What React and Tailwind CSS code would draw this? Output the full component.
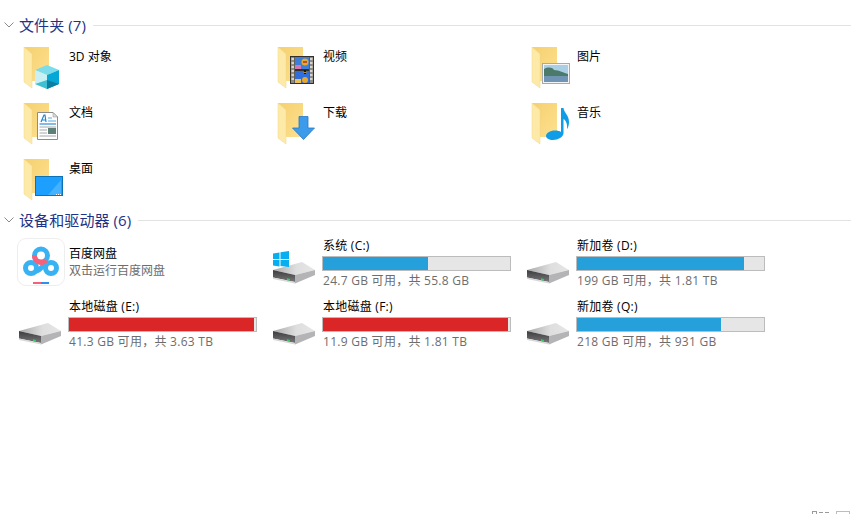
import React from "react";

const font = "font-['Open_Sans','Noto_Sans_CJK_SC',sans-serif]";

const FolderBase = ({ children }) => (
    <svg width="48" height="48" viewBox="0 0 48 48" className="block shrink-0">
        <defs>
            <linearGradient id="folderBack" x1="0" y1="0" x2="1" y2="1">
                <stop offset="0" stopColor="#f5d06f" />
                <stop offset="1" stopColor="#fde08f" />
            </linearGradient>
        </defs>
        <path d="M8 3H33V37H8Z" fill="url(#folderBack)" />
        <path d="M8 3L16 10V44L8 38Z" fill="#fdeaa9" stroke="#f1d488" strokeWidth="0.5" />
        {children}
    </svg>
);

const CubeIcon = () => (
    <FolderBase>
        <path d="M19 26L31 21L43 26L31 31Z" fill="#7bdcec" />
        <path d="M19 26L31 31V45L19 40Z" fill="#c9f0f4" />
        <path d="M19 40L31 36V45Z" fill="#3fbfd2" />
        <path d="M43 26V40L31 45V31Z" fill="#05a7d6" />
        <path d="M43 40L31 36V45Z" fill="#0b7f9f" />
    </FolderBase>
);

const VideoIcon = () => (
    <FolderBase>
        <rect x="20" y="12" width="24" height="28" fill="#33302c" />
        <rect x="21" y="13" width="3.5" height="26" fill="#8f8c86" />
        <rect x="39.5" y="13" width="3.5" height="26" fill="#8f8c86" />
        <path d="M21.5 15h2.5M21.5 19h2.5M21.5 23h2.5M21.5 27h2.5M21.5 31h2.5M21.5 35h2.5M40 15h2.5M40 19h2.5M40 23h2.5M40 27h2.5M40 31h2.5M40 35h2.5" stroke="#efece5" strokeWidth="1.5" />
        <rect x="25" y="13" width="14" height="12" fill="#3f7ed8" />
        <rect x="25" y="27" width="14" height="12" fill="#2f6ddb" />
        <rect x="25" y="21" width="6" height="4" fill="#d678b0" />
        <rect x="25" y="35" width="6" height="4" fill="#e8c05a" />
        <circle cx="35" cy="18" r="3.5" fill="#e6a92c" />
        <path d="M33 18h4" stroke="#a9332a" strokeWidth="1.5" />
        <path d="M34 26h2v4h-2z" fill="#151515" />
        <circle cx="35" cy="36" r="3" fill="#e6a92c" />
        <path d="M33 28a2.5 2.5 0 0 0 4 0z" fill="#c9a02b" />
    </FolderBase>
);

const PictureIcon = () => (
    <FolderBase>
        <rect x="18.5" y="19.5" width="27" height="20" fill="#f4f4f4" stroke="#a9a9a9" strokeWidth="1" />
        <rect x="20" y="21" width="24" height="17" fill="#a9cfe6" />
        <path d="M20 25C24 23 28 23 30 26C35 26 40 29 44 30V33H20Z" fill="#4c7a6a" />
        <rect x="20" y="32" width="24" height="6" fill="#6f94b4" />
    </FolderBase>
);

const DocIcon = () => (
    <FolderBase>
        <path d="M21.5 12.5H37L41.5 17V39.5H21.5Z" fill="#fff" stroke="#8c8c8c" />
        <path d="M37 12.5V17H41.5Z" fill="#dcdcdc" stroke="#8c8c8c" strokeWidth="0.5" />
        <path d="M25 22L28 15H29L30 22M26 20H29.5" stroke="#1f86d8" strokeWidth="1.2" fill="none" />
        <path d="M32 18H36M32 21H40" stroke="#5aa7dd" />
        <path d="M23.5 24H40" stroke="#2a8bdb" strokeWidth="1.2" />
        <path d="M23.5 27H40M23.5 30H31M23.5 33H31M23.5 36H40" stroke="#a6a6a6" />
        <rect x="32" y="28" width="8" height="6" fill="#5d7f78" />
    </FolderBase>
);

const DownloadIcon = () => (
    <FolderBase>
        <path d="M29 16.5H38V28H44.5L33.5 39.5L22.5 28H29Z" fill="#3c9bea" stroke="#2578c4" strokeWidth="0.8" />
    </FolderBase>
);

const MusicIcon = () => (
    <FolderBase>
        <path d="M37 8H39.5C40 13 45 15 45 22C45 25 44 28 43 29C43.5 25 42.5 21 39.5 19V33C39.5 37 34 40 29 40C25 40 22 38 22 36C22 33 26 30.5 31 30.5C33.5 30.5 36 31 37 32Z" fill="#0f9de8" />
    </FolderBase>
);

const DesktopIcon = () => (
    <FolderBase>
        <rect x="19.5" y="20.5" width="27" height="19" fill="#1c9fff" stroke="#0b72b8" />
        <path d="M32 39L45 24V39Z" fill="#45b2ff" />
        <path d="M40 38.5h1M42 38.5h1M44 38.5h1" stroke="#fff" />
    </FolderBase>
);

const BaiduIcon = () => (
    <div className="w-[48px] h-[48px] rounded-[9px] border border-[#eeeeee] bg-white shrink-0">
        <svg width="46" height="46" viewBox="0 0 46 46" className="block">
            <circle cx="13" cy="29" r="5.5" fill="none" stroke="#38b2f2" strokeWidth="5" />
            <circle cx="33" cy="29" r="5.5" fill="none" stroke="#38b2f2" strokeWidth="5" />
            <path d="M18 32C21 33 25 25 28 26" fill="none" stroke="#38b2f2" strokeWidth="5" />
            <circle cx="23" cy="16.5" r="6.5" fill="none" stroke="#38b2f2" strokeWidth="5" />
            <path d="M16.5 16.5A6.5 6.5 0 0 0 28 21" fill="none" stroke="#f8607a" strokeWidth="5" />
            <rect x="15" y="43" width="8" height="2" fill="#f8607a" />
            <rect x="23" y="43" width="8" height="2" fill="#2e8ff0" />
        </svg>
    </div>
);

// plain hard disk, the C: one gets the windows flag on top
const DriveIcon = ({ windows }) => (
    <svg width="48" height="48" viewBox="0 0 48 48" className="block shrink-0">
        <defs>
            <linearGradient id="driveTop" x1="0" y1="0" x2="1" y2="0">
                <stop offset="0" stopColor="#a8a8a8" />
                <stop offset="0.55" stopColor="#dedede" />
                <stop offset="1" stopColor="#e6e6e8" />
            </linearGradient>
            <linearGradient id="driveFront" x1="0" y1="0" x2="0" y2="1">
                <stop offset="0" stopColor="#3c3c3e" />
                <stop offset="1" stopColor="#77777a" />
            </linearGradient>
        </defs>
        <path d="M3 31L32 23L45 31L25 36Z" fill="url(#driveTop)" />
        <path d="M3 31L25 36V43L3 38.5Z" fill="url(#driveFront)" />
        <path d="M3 38.5L25 43V44.5L3 40Z" fill="#d8d8d8" />
        <path d="M25 36L45 31V36L25 44.5Z" fill="#b4b4b7" />
        <path d="M17 39.3L20 40V41.8L17 41.2Z" fill="#35d05f" />
        {windows && (
            <path d="M3 14.5L9.5 13.5V20H3ZM10.5 13.3L19 12V20H10.5ZM3 21H9.5V27.5L3 26.5ZM10.5 21H19V28L10.5 27Z" fill="#08aeef" />
        )}
    </svg>
);

const Chevron = () => (
    <svg width="10" height="6" viewBox="0 0 10 6" className="shrink-0">
        <path d="M0.5 0.5L5 5L9.5 0.5" fill="none" stroke="#8a8a8a" strokeWidth="1" />
    </svg>
);

const SectionHeader = ({ title }) => (
    <div className="flex items-center h-[18px] pl-[4px] pr-[5px]">
        <Chevron />
        <span className="ml-[5px] text-[15px] leading-[18px] tracking-[0.1px] text-[#1e3287] whitespace-nowrap">{title}</span>
        <div className="flex-1 h-px bg-[#e2e2e2] ml-[7px]" />
    </div>
);

const FolderItem = ({ name, Icon }) => (
    <div className="flex h-[56px] items-start">
        <Icon />
        <div className="ml-[5px] mt-[4px] text-[12px] leading-[18px] text-black">{name}</div>
    </div>
);

const DriveItem = ({ name, free, percent, red, windows }) => (
    <div className="flex items-end h-full">
        <div className="mb-[2px]">
            <DriveIcon windows={windows} />
        </div>
        <div className="ml-[4px] w-[189px] flex flex-col">
            <div className="text-[12px] leading-[16px] tracking-[0.25px] text-black px-px">{name}</div>
            <div className="h-[15px] mt-[2px] border border-[#bcbcbc] bg-[#e6e6e6]">
                <div
                    className={red ? "h-full bg-[#da2626]" : "h-full bg-[#26a0da]"}
                    style={{ width: `${percent}%` }}
                />
            </div>
            <div className="text-[12px] leading-[16px] tracking-[0.27px] mt-[2px] px-px text-[#6d6d6d] whitespace-nowrap">{free}</div>
        </div>
    </div>
);

const folders = [
    { name: "3D 对象", Icon: CubeIcon },
    { name: "视频", Icon: VideoIcon },
    { name: "图片", Icon: PictureIcon },
    { name: "文档", Icon: DocIcon },
    { name: "下载", Icon: DownloadIcon },
    { name: "音乐", Icon: MusicIcon },
    { name: "桌面", Icon: DesktopIcon },
];

export default function App() {
    return (
        <div className={`${font} w-[856px] h-[514px] bg-white overflow-hidden flex flex-col`}>
            <div className="pt-[16px]">
                <SectionHeader title="文件夹 (7)" />
            </div>
            <div className="grid grid-cols-[254px_254px_254px] pl-[16px] pt-[10px]">
                {folders.map((f) => (
                    <FolderItem key={f.name} name={f.name} Icon={f.Icon} />
                ))}
            </div>
            <div className="mt-[-1px]">
                <SectionHeader title="设备和驱动器 (6)" />
            </div>
            <div className="grid grid-cols-[254px_254px_254px] grid-rows-[60px_61px] pl-[16px]">
                <div className="flex pt-[9px]">
                    <div className="ml-px">
                        <BaiduIcon />
                    </div>
                    <div className="ml-[4px] pt-[7px] text-[12px] leading-[17px]">
                        <div className="text-black">百度网盘</div>
                        <div className="text-[#6d6d6d]">双击运行百度网盘</div>
                    </div>
                </div>
                <DriveItem name="系统 (C:)" free="24.7 GB 可用，共 55.8 GB" percent={56} windows />
                <DriveItem name="新加卷 (D:)" free="199 GB 可用，共 1.81 TB" percent={89.5} />
                <DriveItem name="本地磁盘 (E:)" free="41.3 GB 可用，共 3.63 TB" percent={99} red />
                <DriveItem name="本地磁盘 (F:)" free="11.9 GB 可用，共 1.81 TB" percent={99} red />
                <DriveItem name="新加卷 (Q:)" free="218 GB 可用，共 931 GB" percent={77} />
            </div>
            <div className="mt-auto h-[3px] flex items-start justify-end pr-[6px] overflow-hidden">
                <div className="w-[5px] h-[5px] border border-[#9a9a9a]" />
                <div className="w-[4px] h-px bg-[#9a9a9a] ml-[2px] mt-[1px]" />
                <div className="w-[4px] h-px bg-[#9a9a9a] ml-[2px] mt-[1px]" />
                <div className="w-[14px] h-[8px] border border-[#bdbdbd] ml-[7px]" />
            </div>
        </div>
    );
}
